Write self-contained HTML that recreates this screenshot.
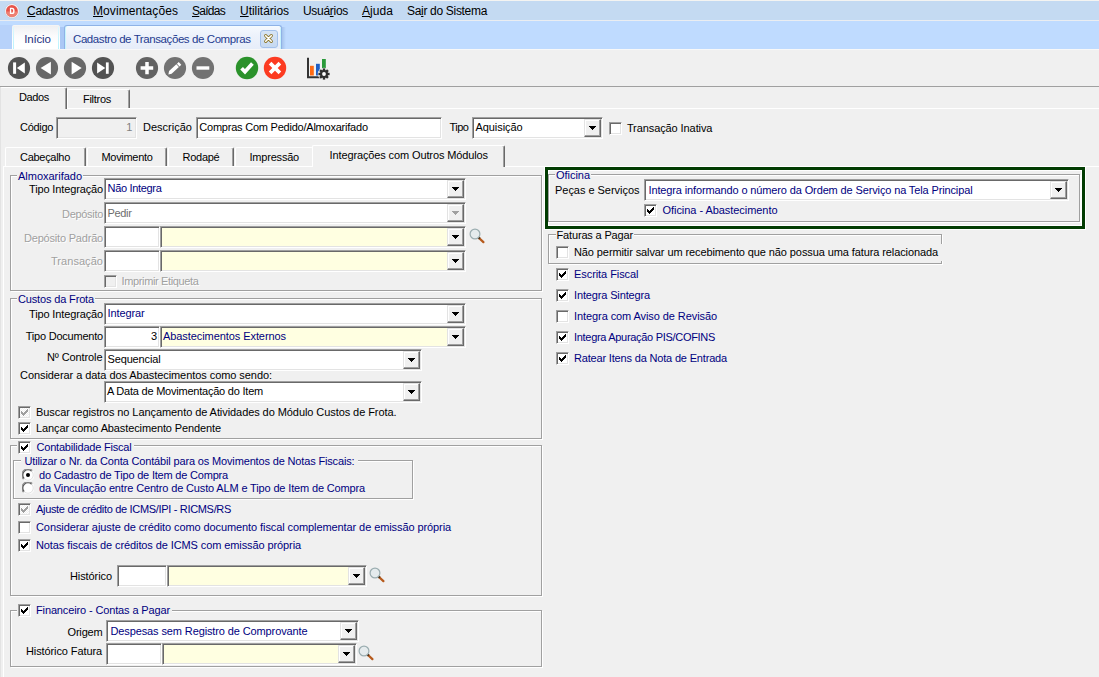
<!DOCTYPE html>
<html><head><meta charset="utf-8"><title>Cadastro de Transações de Compras</title>
<style>
html,body{margin:0;padding:0}
body{width:1099px;height:677px;overflow:hidden;position:relative;background:#f0f0f0;font-family:"Liberation Sans",sans-serif}
.abs,.t,.sunk,.btn,.cb,.grp,.tab{position:absolute;box-sizing:border-box}
.t{white-space:nowrap}
.t u{text-decoration:underline}
.dis{text-shadow:1px 1px 0 #fff}
.sunk{border:1px solid;border-color:#a0a0a0 #fff #fff #a0a0a0;box-shadow:inset 1px 1px 0 #696969, inset -1px -1px 0 #e3e3e3}
.btn{background:#f0f0f0;border:1px solid;border-color:#e3e3e3 #696969 #696969 #e3e3e3;box-shadow:inset -1px -1px 0 #a0a0a0, inset 1px 1px 0 #fff}
.cb{width:13px;height:13px;border:1px solid;border-color:#a0a0a0 #fff #fff #a0a0a0;box-shadow:inset 1px 1px 0 #696969, inset -1px -1px 0 #e3e3e3}
.cb svg{position:absolute;left:2px;top:2px}
.grp{border:1px solid #a0a0a0;box-shadow:1px 1px 0 #fff, inset 1px 1px 0 #fff}
.tab{border-left:1px solid #fff;border-top:1px solid #fff;border-right:1px solid #696969;box-shadow:inset -1px 0 0 #a0a0a0;border-radius:2px 2px 0 0}
</style></head>
<body>
<div class="abs" style="left:0px;top:0px;width:1099px;height:21px;background:#c4daf2"></div>
<div class="abs" style="left:0px;top:0px;width:1099px;height:1px;background:#f4f4f2"></div>
<div class="abs" style="left:0px;top:20px;width:1099px;height:1px;background:#eaedf1"></div>
<div class="abs" style="left:0px;top:21px;width:1099px;height:28px;background:#bfdbff"></div>
<div class="abs" style="left:0px;top:25px;width:12px;height:24px;background:#b7d2fa"></div>
<div class="abs" style="left:60px;top:27px;width:5px;height:22px;background:#abc8f5"></div>
<div class="abs" style="left:282px;top:27px;width:4px;height:22px;background:linear-gradient(90deg,#a6c3ed,#bfdbff)"></div>
<svg class="abs" style="left:4px;top:3px" width="16" height="16" viewBox="0 0 16 16"><circle cx="8" cy="8" r="7.3" fill="#f6f7f9" stroke="#b9c8dc" stroke-width="0.7"/><circle cx="7.9" cy="8" r="5.9" fill="#e8544a"/><path d="M2 8.4 A5.9 5.9 0 0 0 13.8 8.4 Z" fill="#ee8073"/><path d="M5.9 4.7 h2.1 a2.6 3.2 0 0 1 0 6.4 h-2.1 z M7.2 6 v3.8 h0.7 a1.3 1.9 0 0 0 0 -3.8 z" fill="#fff" fill-rule="evenodd"/></svg>
<div class="t " style="left:27.0px;top:2.7px;height:16px;line-height:16px;font-size:12px;color:#000;letter-spacing:-0.300px;"><u>C</u>adastros</div>
<div class="t " style="left:93.0px;top:2.7px;height:16px;line-height:16px;font-size:12px;color:#000;letter-spacing:0.073px;"><u>M</u>ovimentações</div>
<div class="t " style="left:192.0px;top:2.7px;height:16px;line-height:16px;font-size:12px;color:#000;letter-spacing:-0.727px;"><u>S</u>aídas</div>
<div class="t " style="left:240.0px;top:2.7px;height:16px;line-height:16px;font-size:12px;color:#000;letter-spacing:-0.031px;"><u>U</u>tilitários</div>
<div class="t " style="left:303.0px;top:2.7px;height:16px;line-height:16px;font-size:12px;color:#000;letter-spacing:-0.295px;">Usuá<u>r</u>ios</div>
<div class="t " style="left:362.0px;top:2.7px;height:16px;line-height:16px;font-size:12px;color:#000;letter-spacing:0.059px;"><u>A</u>juda</div>
<div class="t " style="left:407.0px;top:2.7px;height:16px;line-height:16px;font-size:12px;color:#000;letter-spacing:-0.314px;">Sa<u>i</u>r do Sistema</div>
<div class="abs" style="left:12px;top:25px;width:48px;height:24px;background:linear-gradient(#eeeff1,#fbfbfc 45%,#fff 75%);border-radius:3px 3px 0 0;box-shadow:inset 0 1px 0 #f4f4f4"></div>
<div class="abs" style="left:13px;top:27px;width:1px;height:22px;background:linear-gradient(#dcf9fe,#b9f2fd)"></div>
<div class="abs" style="left:58px;top:27px;width:1px;height:22px;background:linear-gradient(#dcf9fe,#b9f2fd)"></div>
<div class="t " style="left:24.2px;top:31.5px;height:15.5px;line-height:15.5px;font-size:11.5px;color:#23307e;letter-spacing:-0.167px;">Início</div>
<div class="abs" style="left:64px;top:25px;width:218px;height:24px;background:linear-gradient(#f6f9fe,#edf2fb 40%,#e6edf9);border-radius:3px 3px 0 0;border:1px solid #8fb2e6;border-bottom:none;box-shadow:inset 1px 0 0 #c6f4fd, inset 0 1px 0 #f4fbff, inset -1px 0 0 #c6f4fd"></div>
<div class="t " style="left:73.0px;top:31.5px;height:15.5px;line-height:15.5px;font-size:11.5px;color:#1f3b8f;letter-spacing:-0.413px;">Cadastro de Transações de Compras</div>
<div class="abs" style="left:260px;top:30px;width:18px;height:18px;background:linear-gradient(#d6e4f6,#c6d9f1);border:1px solid #a4c1eb;border-radius:3px"></div>
<svg class="abs" style="left:263px;top:33px" width="11" height="11" viewBox="0 0 11 11"><path d="M2.7 2.7 L8.3 8.3 M8.3 2.7 L2.7 8.3" stroke="#8c7425" stroke-width="3.2" stroke-linecap="round"/><path d="M2.7 2.7 L8.3 8.3 M8.3 2.7 L2.7 8.3" stroke="#fff" stroke-width="1.6" stroke-linecap="round"/></svg>
<div class="abs" style="left:0px;top:49px;width:1099px;height:628px;background:#f0f0f0"></div>
<div class="abs" style="left:0px;top:49px;width:1099px;height:1px;background:#f8f8f8"></div>
<svg class="abs" style="left:6.9px;top:55.8px" width="24" height="24" viewBox="0 0 24 24"><circle cx="12" cy="12" r="11.1" fill="#535353"/><rect x="6.1" y="6.4" width="3" height="11.4" fill="#fff"/><path d="M17.8 6.6 V17.6 L9.9 12.1 Z" fill="#fff"/></svg>
<svg class="abs" style="left:35.0px;top:55.8px" width="24" height="24" viewBox="0 0 24 24"><circle cx="12" cy="12" r="11.1" fill="#686868"/><path d="M15.9 5.8 V18.4 L5.6 12.1 Z" fill="#fff"/></svg>
<svg class="abs" style="left:62.9px;top:55.8px" width="24" height="24" viewBox="0 0 24 24"><circle cx="12" cy="12" r="11.1" fill="#686868"/><path d="M8.6 5.8 V18.4 L18.7 12.1 Z" fill="#fff"/></svg>
<svg class="abs" style="left:91.0px;top:55.8px" width="24" height="24" viewBox="0 0 24 24"><circle cx="12" cy="12" r="11.1" fill="#535353"/><rect x="14.9" y="6.4" width="2.8" height="11.4" fill="#fff"/><path d="M6.1 6.6 V17.6 L14.3 12.1 Z" fill="#fff"/></svg>
<svg class="abs" style="left:134.9px;top:55.8px" width="24" height="24" viewBox="0 0 24 24"><circle cx="12" cy="12" r="11.1" fill="#626262"/><path d="M12 6 V18.3 M5.6 12 H18.2" stroke="#fff" stroke-width="3.5"/></svg>
<svg class="abs" style="left:163.0px;top:55.8px" width="24" height="24" viewBox="0 0 24 24"><circle cx="12" cy="12" r="11.1" fill="#727272"/><path d="M5.4 18.4 L6.06 14.91 L13.36 8.22 L15.92 11.02 L8.62 17.71 Z M13.95 7.68 L15.72 6.05 L18.28 8.85 L16.51 10.48 Z" fill="#fff"/></svg>
<svg class="abs" style="left:191.0px;top:55.8px" width="24" height="24" viewBox="0 0 24 24"><circle cx="12" cy="12" r="11.1" fill="#727272"/><path d="M5.5 12 H18.3" stroke="#fff" stroke-width="3.4"/></svg>
<svg class="abs" style="left:235.0px;top:56.0px" width="24" height="24" viewBox="0 0 24 24"><circle cx="12" cy="12" r="11.2" fill="#2b922b"/><path d="M6.6 12.2 L10 15.8 L17.4 7.6" stroke="#fff" stroke-width="3.7" fill="none"/></svg>
<svg class="abs" style="left:263.0px;top:56.0px" width="24" height="24" viewBox="0 0 24 24"><circle cx="12" cy="12" r="11.2" fill="#fc3b21"/><path d="M7.1 7.1 L16.9 16.9 M16.9 7.1 L7.1 16.9" stroke="#fff" stroke-width="3.7"/></svg>
<svg class="abs" style="left:305px;top:56px" width="28" height="26" viewBox="0 0 28 26"><path d="M3 1.8 V21.3 H15" stroke="#333" stroke-width="2" fill="none"/><rect x="5" y="9.8" width="3.8" height="9.7" fill="#ff6a13"/><rect x="11" y="7.8" width="3.8" height="11.7" fill="#1f5fc4"/><rect x="17" y="3" width="3.8" height="11" fill="#2a9a3a"/><circle cx="19" cy="18" r="6.2" fill="#f0f0f0"/><g transform="translate(19,18)"><rect x="-1.2" y="-5.6" width="2.4" height="3" fill="#2f2f2f" transform="rotate(0)"/><rect x="-1.2" y="-5.6" width="2.4" height="3" fill="#2f2f2f" transform="rotate(45)"/><rect x="-1.2" y="-5.6" width="2.4" height="3" fill="#2f2f2f" transform="rotate(90)"/><rect x="-1.2" y="-5.6" width="2.4" height="3" fill="#2f2f2f" transform="rotate(135)"/><rect x="-1.2" y="-5.6" width="2.4" height="3" fill="#2f2f2f" transform="rotate(180)"/><rect x="-1.2" y="-5.6" width="2.4" height="3" fill="#2f2f2f" transform="rotate(225)"/><rect x="-1.2" y="-5.6" width="2.4" height="3" fill="#2f2f2f" transform="rotate(270)"/><rect x="-1.2" y="-5.6" width="2.4" height="3" fill="#2f2f2f" transform="rotate(315)"/><circle r="4" fill="#2f2f2f"/><circle r="1.9" fill="#fff"/></g></svg>
<div class="abs" style="left:0px;top:86px;width:1099px;height:1px;background:#a0a0a0"></div>
<div class="abs" style="left:0px;top:87px;width:1px;height:590px;background:#e3e3e3"></div>
<div class="abs" style="left:0px;top:108px;width:1099px;height:1px;background:#fff"></div>
<div class="tab" style="left:67px;top:89px;width:63px;height:19px;"></div>
<div class="t " style="left:83.0px;top:91.5px;height:15px;line-height:15px;font-size:11px;color:#000;letter-spacing:-0.279px;">Filtros</div>
<div class="tab" style="left:0px;top:87px;width:67px;height:22px;background:#f0f0f0;border-left-color:#f0f0f0"></div>
<div class="abs" style="left:0px;top:87px;width:1px;height:22px;background:#e3e3e3"></div>
<div class="t " style="left:19.0px;top:89.5px;height:15px;line-height:15px;font-size:11px;color:#000;letter-spacing:-0.359px;">Dados</div>
<div class="t " style="left:20.0px;top:119.5px;height:15px;line-height:15px;font-size:11px;color:#000;letter-spacing:-0.310px;">Código</div>
<div class="sunk" style="left:56px;top:117px;width:81px;height:22px;background:#f0f0f0;"></div>
<div class="t " style="left:126.3px;top:119.5px;height:15px;line-height:15px;font-size:11px;color:#808080;letter-spacing:-0.100px;">1</div>
<div class="t " style="left:143.0px;top:119.5px;height:15px;line-height:15px;font-size:11px;color:#000;letter-spacing:0.010px;">Descrição</div>
<div class="sunk" style="left:196px;top:117px;width:246px;height:22px;background:#fff;"></div>
<div class="t " style="left:199.3px;top:119.5px;height:15px;line-height:15px;font-size:11px;color:#000;letter-spacing:-0.225px;">Compras Com Pedido/Almoxarifado</div>
<div class="t " style="left:449.5px;top:119.5px;height:15px;line-height:15px;font-size:11px;color:#000;letter-spacing:-0.500px;">Tipo</div>
<div class="sunk" style="left:472px;top:117px;width:131px;height:22px;background:#fff;"></div>
<div class="btn" style="left:584px;top:119px;width:17px;height:18px"><svg width="7" height="4" viewBox="0 0 7 4" shape-rendering="crispEdges" style="position:absolute;left:4px;top:6px"><path d="M0 0h7v1h-1v1h-1v1h-1v1h-1v-1h-1v-1h-1v-1h-1z" fill="#000"/></svg></div>
<div class="t " style="left:475.5px;top:119.5px;height:15px;line-height:15px;font-size:11px;color:#000;letter-spacing:-0.078px;">Aquisição</div>
<div class="cb" style="left:609px;top:122px;background:#fff"></div>
<div class="t " style="left:626.9px;top:120.5px;height:15px;line-height:15px;font-size:11px;color:#000;letter-spacing:-0.090px;">Transação Inativa</div>
<div class="abs" style="left:3px;top:166px;width:1096px;height:1px;background:#fff"></div>
<div class="abs" style="left:3px;top:166px;width:1px;height:511px;background:#fff"></div>
<div class="tab" style="left:5px;top:147px;width:81px;height:19px;"></div>
<div class="t " style="left:20.0px;top:149.5px;height:15px;line-height:15px;font-size:11px;color:#000;letter-spacing:-0.288px;">Cabeçalho</div>
<div class="tab" style="left:87px;top:147px;width:80px;height:19px;"></div>
<div class="t " style="left:101.5px;top:149.5px;height:15px;line-height:15px;font-size:11px;color:#000;letter-spacing:-0.311px;">Movimento</div>
<div class="tab" style="left:168px;top:147px;width:66px;height:19px;"></div>
<div class="t " style="left:182.5px;top:149.5px;height:15px;line-height:15px;font-size:11px;color:#000;letter-spacing:-0.258px;">Rodapé</div>
<div class="tab" style="left:235px;top:147px;width:78px;height:19px;border-right-color:transparent;box-shadow:none"></div>
<div class="t " style="left:249.5px;top:149.5px;height:15px;line-height:15px;font-size:11px;color:#000;letter-spacing:-0.207px;">Impressão</div>
<div class="tab" style="left:312px;top:145px;width:193px;height:22px;background:#f0f0f0"></div>
<div class="t " style="left:329.5px;top:147.5px;height:15px;line-height:15px;font-size:11px;color:#000;letter-spacing:-0.118px;">Integrações com Outros Módulos</div>
<div class="grp" style="left:10px;top:175px;width:532px;height:116px;"></div>
<div class="abs" style="left:17px;top:175px;width:66.0px;height:2px;background:#f0f0f0"></div>
<div class="t " style="left:18.0px;top:168.5px;height:15px;line-height:15px;font-size:11px;color:#000080;letter-spacing:-0.017px;">Almoxarifado</div>
<div class="t " style="left:29.0px;top:181.5px;height:15px;line-height:15px;font-size:11px;color:#000;letter-spacing:-0.135px;">Tipo Integração</div>
<div class="sunk" style="left:104px;top:178px;width:362px;height:22px;background:#fff;"></div>
<div class="btn" style="left:447px;top:180px;width:17px;height:18px"><svg width="7" height="4" viewBox="0 0 7 4" shape-rendering="crispEdges" style="position:absolute;left:4px;top:6px"><path d="M0 0h7v1h-1v1h-1v1h-1v1h-1v-1h-1v-1h-1v-1h-1z" fill="#000"/></svg></div>
<div class="t " style="left:107.5px;top:180.5px;height:15px;line-height:15px;font-size:11px;color:#000080;letter-spacing:-0.317px;">Não Integra</div>
<div class="t dis" style="left:62.0px;top:206.5px;height:15px;line-height:15px;font-size:11px;color:#a0a0a0;letter-spacing:-0.303px;">Depósito</div>
<div class="sunk" style="left:104px;top:202px;width:362px;height:22px;background:#fff;"></div>
<div class="btn" style="left:447px;top:204px;width:17px;height:18px"><svg width="7" height="4" viewBox="0 0 7 4" shape-rendering="crispEdges" style="position:absolute;left:4px;top:6px"><path d="M0 0h7v1h-1v1h-1v1h-1v1h-1v-1h-1v-1h-1v-1h-1z" fill="#a0a0a0"/></svg></div>
<div class="t " style="left:107.5px;top:205.5px;height:15px;line-height:15px;font-size:11px;color:#6d6d6d;letter-spacing:-0.338px;">Pedir</div>
<div class="t dis" style="left:24.0px;top:230.5px;height:15px;line-height:15px;font-size:11px;color:#a0a0a0;letter-spacing:-0.197px;">Depósito Padrão</div>
<div class="sunk" style="left:104px;top:226px;width:56px;height:22px;background:#fff;"></div>
<div class="sunk" style="left:160px;top:226px;width:306px;height:22px;background:#ffffe1;"></div>
<div class="btn" style="left:447px;top:228px;width:17px;height:18px"><svg width="7" height="4" viewBox="0 0 7 4" shape-rendering="crispEdges" style="position:absolute;left:4px;top:6px"><path d="M0 0h7v1h-1v1h-1v1h-1v1h-1v-1h-1v-1h-1v-1h-1z" fill="#000"/></svg></div>
<svg class="abs" style="left:467.7px;top:226.7px" width="20" height="20" viewBox="0 0 20 20"><line x1="11" y1="11" x2="15.4" y2="15.1" stroke="#b65a1c" stroke-width="2.3" stroke-linecap="round"/><line x1="10.6" y1="10.6" x2="11.8" y2="11.7" stroke="#4d2c12" stroke-width="2.3"/><circle cx="7" cy="7" r="4.9" fill="#e5ebed" stroke="#9badb0" stroke-width="1.2"/></svg>
<div class="t dis" style="left:51.0px;top:253.5px;height:15px;line-height:15px;font-size:11px;color:#a0a0a0;letter-spacing:0.049px;">Transação</div>
<div class="sunk" style="left:104px;top:250px;width:56px;height:22px;background:#fff;"></div>
<div class="sunk" style="left:160px;top:250px;width:306px;height:22px;background:#ffffe1;"></div>
<div class="btn" style="left:447px;top:252px;width:17px;height:18px"><svg width="7" height="4" viewBox="0 0 7 4" shape-rendering="crispEdges" style="position:absolute;left:4px;top:6px"><path d="M0 0h7v1h-1v1h-1v1h-1v1h-1v-1h-1v-1h-1v-1h-1z" fill="#000"/></svg></div>
<div class="cb" style="left:104px;top:275px;background:#f0f0f0"></div>
<div class="t dis" style="left:121.5px;top:273.5px;height:15px;line-height:15px;font-size:11px;color:#a0a0a0;letter-spacing:-0.361px;">Imprimir Etiqueta</div>
<div class="grp" style="left:10px;top:298px;width:532px;height:141px;"></div>
<div class="abs" style="left:17px;top:298px;width:78.0px;height:2px;background:#f0f0f0"></div>
<div class="t " style="left:18.0px;top:291.5px;height:15px;line-height:15px;font-size:11px;color:#000080;letter-spacing:-0.151px;">Custos da Frota</div>
<div class="t " style="left:29.0px;top:306.5px;height:15px;line-height:15px;font-size:11px;color:#000;letter-spacing:-0.135px;">Tipo Integração</div>
<div class="sunk" style="left:104px;top:303px;width:362px;height:22px;background:#fff;"></div>
<div class="btn" style="left:447px;top:305px;width:17px;height:18px"><svg width="7" height="4" viewBox="0 0 7 4" shape-rendering="crispEdges" style="position:absolute;left:4px;top:6px"><path d="M0 0h7v1h-1v1h-1v1h-1v1h-1v-1h-1v-1h-1v-1h-1z" fill="#000"/></svg></div>
<div class="t " style="left:107.5px;top:305.5px;height:15px;line-height:15px;font-size:11px;color:#000080;letter-spacing:-0.115px;">Integrar</div>
<div class="t " style="left:25.7px;top:329.0px;height:15px;line-height:15px;font-size:11px;color:#000;letter-spacing:-0.215px;">Tipo Documento</div>
<div class="sunk" style="left:104px;top:326px;width:56px;height:22px;background:#fff;"></div>
<div class="t " style="left:151.0px;top:329.0px;height:15px;line-height:15px;font-size:11px;color:#000;letter-spacing:-0.100px;">3</div>
<div class="sunk" style="left:160px;top:326px;width:306px;height:22px;background:#ffffe1;"></div>
<div class="btn" style="left:447px;top:328px;width:17px;height:18px"><svg width="7" height="4" viewBox="0 0 7 4" shape-rendering="crispEdges" style="position:absolute;left:4px;top:6px"><path d="M0 0h7v1h-1v1h-1v1h-1v1h-1v-1h-1v-1h-1v-1h-1z" fill="#000"/></svg></div>
<div class="t " style="left:163.0px;top:329.0px;height:15px;line-height:15px;font-size:11px;color:#000080;letter-spacing:-0.075px;">Abastecimentos Externos</div>
<div class="t " style="left:47.0px;top:349.5px;height:15px;line-height:15px;font-size:11px;color:#000;letter-spacing:-0.101px;">Nº Controle</div>
<div class="sunk" style="left:104px;top:349px;width:318px;height:22px;background:#fff;"></div>
<div class="btn" style="left:403px;top:351px;width:17px;height:18px"><svg width="7" height="4" viewBox="0 0 7 4" shape-rendering="crispEdges" style="position:absolute;left:4px;top:6px"><path d="M0 0h7v1h-1v1h-1v1h-1v1h-1v-1h-1v-1h-1v-1h-1z" fill="#000"/></svg></div>
<div class="t " style="left:107.5px;top:351.5px;height:15px;line-height:15px;font-size:11px;color:#000;letter-spacing:-0.144px;">Sequencial</div>
<div class="t " style="left:20.0px;top:367.5px;height:15px;line-height:15px;font-size:11px;color:#000;letter-spacing:-0.062px;">Considerar a data dos Abastecimentos como sendo:</div>
<div class="sunk" style="left:104px;top:381px;width:318px;height:22px;background:#fff;"></div>
<div class="btn" style="left:403px;top:383px;width:17px;height:18px"><svg width="7" height="4" viewBox="0 0 7 4" shape-rendering="crispEdges" style="position:absolute;left:4px;top:6px"><path d="M0 0h7v1h-1v1h-1v1h-1v1h-1v-1h-1v-1h-1v-1h-1z" fill="#000"/></svg></div>
<div class="t " style="left:107.0px;top:383.5px;height:15px;line-height:15px;font-size:11px;color:#000;letter-spacing:-0.222px;">A Data de Movimentação do Item</div>
<div class="cb" style="left:18px;top:406px;background:repeating-conic-gradient(#fff 0 25%,#f0f0f0 0 50%) 0 0/2px 2px"><svg width="7" height="7" viewBox="0 0 7 7" shape-rendering="crispEdges"><path d="M0 2h1v1h1v1h1v-1h1v-1h1v-1h1v-1h1v3h-1v1h-1v1h-1v1h-1v1h-1v-1h-1v-1h-1z" fill="#a0a0a0"/></svg></div>
<div class="t " style="left:36.0px;top:404.5px;height:15px;line-height:15px;font-size:11px;color:#000;letter-spacing:-0.073px;">Buscar registros no Lançamento de Atividades do Módulo Custos de Frota.</div>
<div class="cb" style="left:18px;top:422px;background:#fff"><svg width="7" height="7" viewBox="0 0 7 7" shape-rendering="crispEdges"><path d="M0 2h1v1h1v1h1v-1h1v-1h1v-1h1v-1h1v3h-1v1h-1v1h-1v1h-1v1h-1v-1h-1v-1h-1z" fill="#000"/></svg></div>
<div class="t " style="left:36.0px;top:420.5px;height:15px;line-height:15px;font-size:11px;color:#000;letter-spacing:-0.117px;">Lançar como Abastecimento Pendente</div>
<div class="grp" style="left:10px;top:445px;width:532px;height:151px;"></div>
<div class="abs" style="left:17px;top:440px;width:117px;height:14px;background:#f0f0f0"></div>
<div class="cb" style="left:18px;top:441px;background:#fff"><svg width="7" height="7" viewBox="0 0 7 7" shape-rendering="crispEdges"><path d="M0 2h1v1h1v1h1v-1h1v-1h1v-1h1v-1h1v3h-1v1h-1v1h-1v1h-1v1h-1v-1h-1v-1h-1z" fill="#000"/></svg></div>
<div class="t " style="left:36.5px;top:439.5px;height:15px;line-height:15px;font-size:11px;color:#000080;letter-spacing:-0.203px;">Contabilidade Fiscal</div>
<div class="grp" style="left:13px;top:460px;width:400px;height:39px;"></div>
<div class="abs" style="left:21.0px;top:460px;width:336.5px;height:2px;background:#f0f0f0"></div>
<div class="t " style="left:24.5px;top:453.5px;height:15px;line-height:15px;font-size:11px;color:#000080;letter-spacing:-0.153px;">Utilizar o Nr. da Conta Contábil para os Movimentos de Notas Fiscais:</div>
<svg class="abs" style="left:22px;top:469px" width="12" height="12" viewBox="0 0 12 12"><circle cx="6" cy="6" r="5.5" fill="#fff"/><path d="M1.6 10.4 A5.5 5.5 0 0 1 10.4 1.6" stroke="#909090" stroke-width="1.1" fill="none"/><path d="M2.3 9.7 A4.5 4.5 0 0 1 9.7 2.3" stroke="#555" stroke-width="1.2" fill="none"/><path d="M10.4 1.6 A5.5 5.5 0 0 1 1.6 10.4" stroke="#fff" stroke-width="1" fill="none"/><path d="M9.7 2.3 A4.5 4.5 0 0 1 2.3 9.7" stroke="#e3e3e3" stroke-width="1" fill="none"/><circle cx="6" cy="6" r="2" fill="#000"/></svg>
<div class="t " style="left:39.0px;top:467.5px;height:15px;line-height:15px;font-size:11px;color:#000080;letter-spacing:-0.197px;">do Cadastro de Tipo de Item de Compra</div>
<svg class="abs" style="left:22px;top:482px" width="12" height="12" viewBox="0 0 12 12"><circle cx="6" cy="6" r="5.5" fill="#fff"/><path d="M1.6 10.4 A5.5 5.5 0 0 1 10.4 1.6" stroke="#909090" stroke-width="1.1" fill="none"/><path d="M2.3 9.7 A4.5 4.5 0 0 1 9.7 2.3" stroke="#555" stroke-width="1.2" fill="none"/><path d="M10.4 1.6 A5.5 5.5 0 0 1 1.6 10.4" stroke="#fff" stroke-width="1" fill="none"/><path d="M9.7 2.3 A4.5 4.5 0 0 1 2.3 9.7" stroke="#e3e3e3" stroke-width="1" fill="none"/></svg>
<div class="t " style="left:39.0px;top:480.5px;height:15px;line-height:15px;font-size:11px;color:#000080;letter-spacing:-0.148px;">da Vinculação entre Centro de Custo ALM e Tipo de Item de Compra</div>
<div class="cb" style="left:18px;top:503px;background:repeating-conic-gradient(#fff 0 25%,#f0f0f0 0 50%) 0 0/2px 2px"><svg width="7" height="7" viewBox="0 0 7 7" shape-rendering="crispEdges"><path d="M0 2h1v1h1v1h1v-1h1v-1h1v-1h1v-1h1v3h-1v1h-1v1h-1v1h-1v1h-1v-1h-1v-1h-1z" fill="#a0a0a0"/></svg></div>
<div class="t " style="left:36.0px;top:501.5px;height:15px;line-height:15px;font-size:11px;color:#000080;letter-spacing:-0.321px;">Ajuste de crédito de ICMS/IPI - RICMS/RS</div>
<div class="cb" style="left:18px;top:521px;background:#fff"></div>
<div class="t " style="left:36.0px;top:519.5px;height:15px;line-height:15px;font-size:11px;color:#000080;letter-spacing:-0.091px;">Considerar ajuste de crédito como documento fiscal complementar de emissão própria</div>
<div class="cb" style="left:18px;top:539px;background:#fff"><svg width="7" height="7" viewBox="0 0 7 7" shape-rendering="crispEdges"><path d="M0 2h1v1h1v1h1v-1h1v-1h1v-1h1v-1h1v3h-1v1h-1v1h-1v1h-1v1h-1v-1h-1v-1h-1z" fill="#000"/></svg></div>
<div class="t " style="left:36.0px;top:537.5px;height:15px;line-height:15px;font-size:11px;color:#000080;letter-spacing:-0.098px;">Notas fiscais de créditos de ICMS com emissão própria</div>
<div class="t " style="left:70.0px;top:568.5px;height:15px;line-height:15px;font-size:11px;color:#000;letter-spacing:-0.089px;">Histórico</div>
<div class="sunk" style="left:117px;top:565px;width:50px;height:22px;background:#fff;"></div>
<div class="sunk" style="left:167px;top:565px;width:200px;height:22px;background:#ffffe1;"></div>
<div class="btn" style="left:348px;top:567px;width:17px;height:18px"><svg width="7" height="4" viewBox="0 0 7 4" shape-rendering="crispEdges" style="position:absolute;left:4px;top:6px"><path d="M0 0h7v1h-1v1h-1v1h-1v1h-1v-1h-1v-1h-1v-1h-1z" fill="#000"/></svg></div>
<svg class="abs" style="left:367.7px;top:565.7px" width="20" height="20" viewBox="0 0 20 20"><line x1="11" y1="11" x2="15.4" y2="15.1" stroke="#b65a1c" stroke-width="2.3" stroke-linecap="round"/><line x1="10.6" y1="10.6" x2="11.8" y2="11.7" stroke="#4d2c12" stroke-width="2.3"/><circle cx="7" cy="7" r="4.9" fill="#e5ebed" stroke="#9badb0" stroke-width="1.2"/></svg>
<div class="grp" style="left:10px;top:610px;width:532px;height:57px;"></div>
<div class="abs" style="left:17px;top:603px;width:155px;height:14px;background:#f0f0f0"></div>
<div class="cb" style="left:18px;top:604px;background:#fff"><svg width="7" height="7" viewBox="0 0 7 7" shape-rendering="crispEdges"><path d="M0 2h1v1h1v1h1v-1h1v-1h1v-1h1v-1h1v3h-1v1h-1v1h-1v1h-1v1h-1v-1h-1v-1h-1z" fill="#000"/></svg></div>
<div class="t " style="left:36.0px;top:602.5px;height:15px;line-height:15px;font-size:11px;color:#000080;letter-spacing:-0.133px;">Financeiro - Contas a Pagar</div>
<div class="t " style="left:67.5px;top:624.5px;height:15px;line-height:15px;font-size:11px;color:#000;letter-spacing:-0.177px;">Origem</div>
<div class="sunk" style="left:106px;top:620px;width:253px;height:22px;background:#fff;"></div>
<div class="btn" style="left:340px;top:622px;width:17px;height:18px"><svg width="7" height="4" viewBox="0 0 7 4" shape-rendering="crispEdges" style="position:absolute;left:4px;top:6px"><path d="M0 0h7v1h-1v1h-1v1h-1v1h-1v-1h-1v-1h-1v-1h-1z" fill="#000"/></svg></div>
<div class="t " style="left:110.5px;top:623.5px;height:15px;line-height:15px;font-size:11px;color:#000080;letter-spacing:-0.115px;">Despesas sem Registro de Comprovante</div>
<div class="t " style="left:26.0px;top:643.5px;height:15px;line-height:15px;font-size:11px;color:#000;letter-spacing:-0.103px;">Histórico Fatura</div>
<div class="sunk" style="left:106px;top:643px;width:56px;height:22px;background:#fff;"></div>
<div class="sunk" style="left:162px;top:643px;width:195px;height:22px;background:#ffffe1;"></div>
<div class="btn" style="left:338px;top:645px;width:17px;height:18px"><svg width="7" height="4" viewBox="0 0 7 4" shape-rendering="crispEdges" style="position:absolute;left:4px;top:6px"><path d="M0 0h7v1h-1v1h-1v1h-1v1h-1v-1h-1v-1h-1v-1h-1z" fill="#000"/></svg></div>
<svg class="abs" style="left:357.2px;top:644.2px" width="20" height="20" viewBox="0 0 20 20"><line x1="11" y1="11" x2="15.4" y2="15.1" stroke="#b65a1c" stroke-width="2.3" stroke-linecap="round"/><line x1="10.6" y1="10.6" x2="11.8" y2="11.7" stroke="#4d2c12" stroke-width="2.3"/><circle cx="7" cy="7" r="4.9" fill="#e5ebed" stroke="#9badb0" stroke-width="1.2"/></svg>
<div class="abs" style="left:544px;top:166px;width:542px;height:64px;border:1px solid #fff;border-top-color:transparent"></div>
<div class="abs" style="left:545px;top:167px;width:540px;height:62px;border:3px solid #023c02"></div>
<div class="abs" style="left:548px;top:170px;width:534px;height:56px;border:1px solid #fff"></div>
<div class="grp" style="left:548px;top:174px;width:532px;height:48px;"></div>
<div class="abs" style="left:555px;top:174px;width:36.0px;height:2px;background:#f0f0f0"></div>
<div class="t " style="left:556.0px;top:167.5px;height:15px;line-height:15px;font-size:11px;color:#000080;letter-spacing:-0.036px;">Oficina</div>
<div class="t " style="left:555.0px;top:182.5px;height:15px;line-height:15px;font-size:11px;color:#000;letter-spacing:-0.030px;">Peças e Serviços</div>
<div class="sunk" style="left:644px;top:179px;width:425px;height:22px;background:#fff;"></div>
<div class="btn" style="left:1050px;top:181px;width:17px;height:18px"><svg width="7" height="4" viewBox="0 0 7 4" shape-rendering="crispEdges" style="position:absolute;left:4px;top:6px"><path d="M0 0h7v1h-1v1h-1v1h-1v1h-1v-1h-1v-1h-1v-1h-1z" fill="#000"/></svg></div>
<div class="t " style="left:648.5px;top:182.5px;height:15px;line-height:15px;font-size:11px;color:#000080;letter-spacing:-0.130px;">Integra informando o número da Ordem de Serviço na Tela Principal</div>
<div class="cb" style="left:644px;top:204px;background:#fff"><svg width="7" height="7" viewBox="0 0 7 7" shape-rendering="crispEdges"><path d="M0 2h1v1h1v1h1v-1h1v-1h1v-1h1v-1h1v3h-1v1h-1v1h-1v1h-1v1h-1v-1h-1v-1h-1z" fill="#000"/></svg></div>
<div class="t " style="left:662.5px;top:202.5px;height:15px;line-height:15px;font-size:11px;color:#000080;letter-spacing:-0.051px;">Oficina - Abastecimento</div>
<div class="grp" style="left:548px;top:234px;width:394px;height:30px;"></div>
<div class="abs" style="left:941px;top:244px;width:2px;height:17px;background:#f0f0f0"></div>
<div class="abs" style="left:555.5px;top:234px;width:78.5px;height:2px;background:#f0f0f0"></div>
<div class="t " style="left:556.5px;top:227.5px;height:15px;line-height:15px;font-size:11px;color:#000;letter-spacing:-0.158px;">Faturas a Pagar</div>
<div class="cb" style="left:556px;top:246px;background:#fff"></div>
<div class="t " style="left:574.0px;top:245.0px;height:15px;line-height:15px;font-size:11px;color:#000;letter-spacing:-0.099px;">Não permitir salvar um recebimento que não possua uma fatura relacionada</div>
<div class="cb" style="left:556px;top:268px;background:#fff"><svg width="7" height="7" viewBox="0 0 7 7" shape-rendering="crispEdges"><path d="M0 2h1v1h1v1h1v-1h1v-1h1v-1h1v-1h1v3h-1v1h-1v1h-1v1h-1v1h-1v-1h-1v-1h-1z" fill="#000"/></svg></div>
<div class="t " style="left:574.0px;top:266.5px;height:15px;line-height:15px;font-size:11px;color:#000080;letter-spacing:-0.065px;">Escrita Fiscal</div>
<div class="cb" style="left:556px;top:289px;background:#fff"><svg width="7" height="7" viewBox="0 0 7 7" shape-rendering="crispEdges"><path d="M0 2h1v1h1v1h1v-1h1v-1h1v-1h1v-1h1v3h-1v1h-1v1h-1v1h-1v1h-1v-1h-1v-1h-1z" fill="#000"/></svg></div>
<div class="t " style="left:574.0px;top:287.5px;height:15px;line-height:15px;font-size:11px;color:#000080;letter-spacing:-0.143px;">Integra Sintegra</div>
<div class="cb" style="left:556px;top:310px;background:#fff"></div>
<div class="t " style="left:574.0px;top:308.5px;height:15px;line-height:15px;font-size:11px;color:#000080;letter-spacing:-0.083px;">Integra com Aviso de Revisão</div>
<div class="cb" style="left:556px;top:331px;background:#fff"><svg width="7" height="7" viewBox="0 0 7 7" shape-rendering="crispEdges"><path d="M0 2h1v1h1v1h1v-1h1v-1h1v-1h1v-1h1v3h-1v1h-1v1h-1v1h-1v1h-1v-1h-1v-1h-1z" fill="#000"/></svg></div>
<div class="t " style="left:574.0px;top:329.5px;height:15px;line-height:15px;font-size:11px;color:#000080;letter-spacing:-0.303px;">Integra Apuração PIS/COFINS</div>
<div class="cb" style="left:556px;top:352px;background:#fff"><svg width="7" height="7" viewBox="0 0 7 7" shape-rendering="crispEdges"><path d="M0 2h1v1h1v1h1v-1h1v-1h1v-1h1v-1h1v3h-1v1h-1v1h-1v1h-1v1h-1v-1h-1v-1h-1z" fill="#000"/></svg></div>
<div class="t " style="left:574.0px;top:350.5px;height:15px;line-height:15px;font-size:11px;color:#000080;letter-spacing:-0.174px;">Ratear Itens da Nota de Entrada</div>
</body></html>
